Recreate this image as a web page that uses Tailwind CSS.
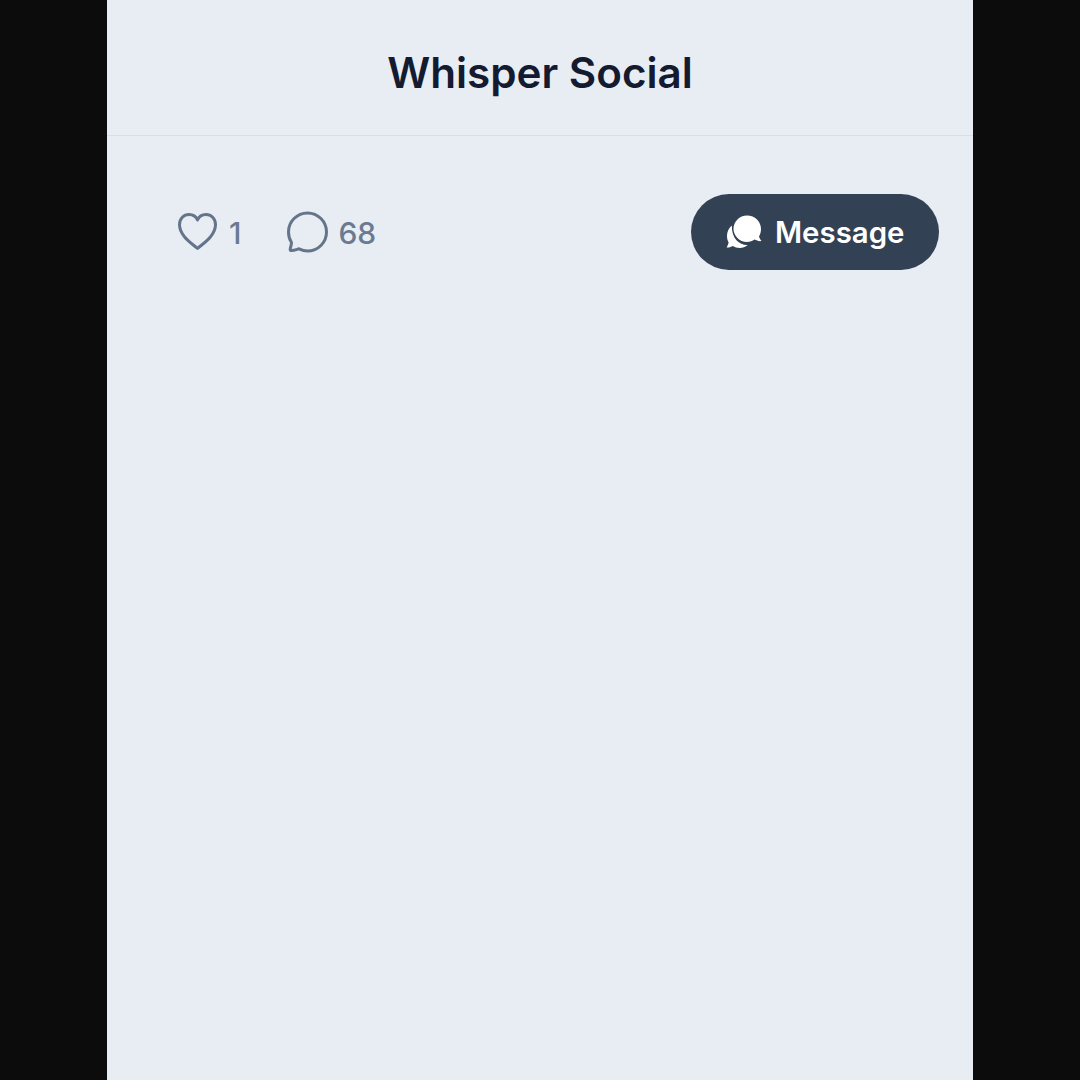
<!DOCTYPE html>
<html lang="en">
<head>
  <meta charset="UTF-8" />
  <meta name="viewport" content="width=device-width, initial-scale=1.0"/>
  <title>Whisper Social</title>
  <script src="https://cdn.jsdelivr.net/npm/@tailwindcss/browser@4"></script>
</head>
<body class="bg-[#0c0c0c] min-h-screen font-['Inter',sans-serif]">
  <div class="mx-auto w-[866px] h-[1080px] bg-[#e8edf4]">

    <!-- Header -->
    <header class="h-[136px] flex items-center justify-center border-b border-[#d5dfe9]">
      <h1 class="text-[42.2px] leading-none font-semibold text-[#141b30] pt-[11px]">Whisper Social</h1>
    </header>

    <!-- Action row -->
    <div class="flex items-center justify-between pl-[70px] pr-[34px] pt-[58px]">
      <div class="flex items-center gap-[46px] text-[30px] font-medium text-[#6b7a90]">
        <div class="flex items-center gap-[10px]">
          <svg class="w-[42px] h-[42px]" viewBox="0 0 42 42" fill="none" stroke="#64748b" stroke-width="3" stroke-linejoin="round">
            <path d="M20.5 37.5 C15 32.5 2.5 25 2.5 13.5 C2.5 7.5 7 3.5 12 3.5 C16 3.5 19 5.5 20.5 9 C22 5.5 25 3.5 29 3.5 C34 3.5 38.5 7.5 38.5 13.5 C38.5 25 26 32.5 20.5 37.5 Z"/>
          </svg>
          <span class="pt-[2px]">1</span>
        </div>
        <div class="flex items-center gap-[9px]">
          <svg class="w-[42px] h-[42px]" viewBox="0 0 42 42" fill="none" stroke="#64748b" stroke-width="3" stroke-linejoin="round">
            <path d="M4.5 39.5 C3.5 39.5 3 39 3.2 38 C3.8 35.5 4.5 33.5 4.5 31.5 C2.5 28.5 1.5 25 1.5 21 C1.5 10.5 10 2 20.5 2 C31 2 39.5 10.5 39.5 21 C39.5 31.5 31 40 20.5 40 C17.5 40 14.5 39 12 37.8 C9.5 38.5 7 39.5 4.5 39.5 Z"/>
          </svg>
          <span class="pt-[2px]">68</span>
        </div>
      </div>

      <button class="flex items-center gap-[13px] h-[76px] w-[248px] pl-[35px] bg-[#334155] rounded-[38px] text-white text-[29.4px] font-semibold">
        <svg class="w-[36px] h-[36px]" viewBox="0 0 36 36" fill="#fff">
          <path d="M21 1.5 C29 1.5 35 7.5 35 15 C35 18 34 20.5 33 22.5 C33.5 24.5 34.5 25.5 35.5 27 C33 27.5 30.5 26.5 28.5 25.5 C26.5 27 24 28 21 28 C13.5 28 7.5 22 7.5 14.8 C7.5 7.5 13.5 1.5 21 1.5 Z"/>
          <path d="M5.8 11.5 C3 14 1 17.5 1 22 C1 24.5 1.6 26.5 2.6 28.3 C2.3 30.5 1.5 32 .6 33.5 C3 33.8 5 33 6.8 32 C8.8 33.3 11 34 13.5 34 C16.5 34 19.5 33 21.8 31 C14 31.5 5.5 25 5.8 11.5 Z"/>
        </svg>
        <span class="pt-[3px]">Message</span>
      </button>
    </div>
  </div>
</body>
</html>
